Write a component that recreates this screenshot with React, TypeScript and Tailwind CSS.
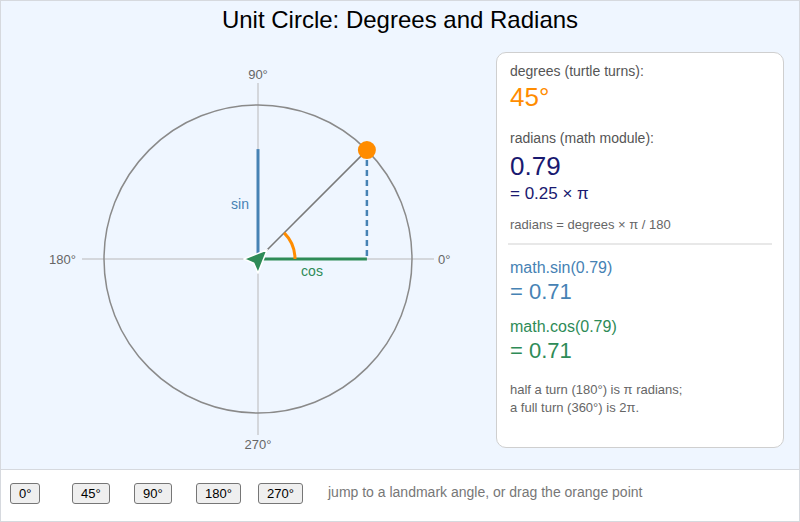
import React, { useState } from "react";

const CX = 257;
const CY = 258;
const R = 154;
const AXIS = 176;

const landmarks = [0, 45, 90, 180, 270];

function fmt(n: number) {
  return (Math.round(n * 100) / 100).toFixed(2);
}

function UnitCircle({ deg }: { deg: number }) {
  const rad = (deg * Math.PI) / 180;
  const px = CX + R * Math.cos(rad);
  const py = CY - R * Math.sin(rad);
  const arcR = 37;
  const ax = CX + arcR * Math.cos(rad);
  const ay = CY - arcR * Math.sin(rad);
  const large = deg > 180 ? 1 : 0;

  return (
    <svg width={490} height={420} viewBox="0 40 490 420" className="block">
      {/* axes */}
      <line x1={CX - AXIS} y1={CY} x2={CX + AXIS} y2={CY} stroke="#d4d7dc" strokeWidth={2} />
      <line x1={CX} y1={CY - AXIS} x2={CX} y2={CY + AXIS} stroke="#d4d7dc" strokeWidth={2} />
      <circle cx={CX} cy={CY} r={R} fill="none" stroke="#8a8a8a" strokeWidth={1.5} />

      <g fontFamily="'Liberation Sans', Arial, sans-serif" fontSize={13} fill="#666">
        <text x={CX} y={78} textAnchor="middle">90°</text>
        <text x={CX} y={448} textAnchor="middle">270°</text>
        <text x={437} y={263}>0°</text>
        <text x={75} y={263} textAnchor="end">180°</text>
      </g>

      {/* sin / cos legs */}
      <line x1={CX} y1={CY} x2={CX} y2={py - 1} stroke="#4682b4" strokeWidth={3} />
      <line x1={CX} y1={CY} x2={px} y2={CY} stroke="#2e8b57" strokeWidth={3} />
      <line x1={px} y1={py} x2={px} y2={CY} stroke="#4682b4" strokeWidth={2.5} strokeDasharray="6 4" />
      <line x1={CX} y1={CY} x2={px} y2={py} stroke="#7a7a7a" strokeWidth={1.5} />

      <path
        d={`M ${CX + arcR} ${CY} A ${arcR} ${arcR} 0 ${large} 0 ${ax} ${ay}`}
        fill="none"
        stroke="#ff8c00"
        strokeWidth={3}
      />

      <g fontFamily="'Liberation Sans', Arial, sans-serif" fontSize={14}>
        <text x={248} y={208} textAnchor="end" fill="#4682b4">sin</text>
        <text x={311} y={275} textAnchor="middle" fill="#2e8b57">cos</text>
      </g>

      {/* turtle */}
      <g transform={`translate(${CX} ${CY}) rotate(${-deg})`}>
        <polygon
          points="13,0 -10,-10 -6,0 -10,10"
          fill="#2e8b57"
          stroke="#ffffff"
          strokeWidth={1.5}
          strokeLinejoin="round"
        />
      </g>

      <circle cx={px} cy={py} r={9} fill="#ff8c00" />
    </svg>
  );
}

export default function App() {
  const [deg, setDeg] = useState(45);
  const rad = (deg * Math.PI) / 180;

  return (
    <div className="w-[800px] h-[522px] border border-[#d6d9de] font-['Liberation_Sans',Arial,sans-serif] flex flex-col overflow-hidden">
      <div className="h-[468px] bg-[#eff6ff] flex flex-col">
        <h1 className="h-[40px] pt-[5px] text-center text-[24px] leading-[28px] text-black">
          Unit Circle: Degrees and Radians
        </h1>
        <div className="flex flex-1">
          <div className="w-[495px]">
            <UnitCircle deg={deg} />
          </div>
          <div className="w-[288px] h-[396px] mt-[11px] bg-white border-[1.5px] border-[#cfcfcf] rounded-[10px] px-[13px] pt-[10px]">
            <div className="text-[14px] leading-[17px] text-[#555]">degrees (turtle turns):</div>
            <div className="text-[26px] leading-[30px] text-[#ff8c00] mt-[2px]">{deg}°</div>

            <div className="text-[14px] leading-[17px] text-[#555] mt-[18px]">radians (math module):</div>
            <div className="text-[26px] leading-[30px] text-[#191970] mt-[4px]">{fmt(rad)}</div>
            <div className="text-[17px] leading-[20px] text-[#191970] mt-[3px]">= {fmt(deg / 180)} × π</div>
            <div className="text-[13px] leading-[16px] text-[#666] mt-[13px]">radians = degrees × π / 180</div>

            <div className="h-[2px] bg-[#e8e8e8] mt-[10px] -mx-[2px]" />

            <div className="text-[16px] leading-[19px] text-[#4682b4] mt-[13px]">math.sin({fmt(rad)})</div>
            <div className="text-[22px] leading-[26px] text-[#4682b4] mt-[2px]">= {fmt(Math.sin(rad))}</div>
            <div className="text-[16px] leading-[19px] text-[#2e8b57] mt-[12px]">math.cos({fmt(rad)})</div>
            <div className="text-[22px] leading-[26px] text-[#2e8b57] mt-[2px]">= {fmt(Math.cos(rad))}</div>

            <div className="text-[13px] leading-[18px] text-[#666] mt-[17px]">
              half a turn (180°) is π radians;
              <br />
              a full turn (360°) is 2π.
            </div>
          </div>
        </div>
      </div>
      <div className="flex-1 bg-white border-t border-[#d6d9de] flex items-start pt-[11px] pl-[9px]">
        {landmarks.map((d) => (
          <div key={d} className="w-[62px]">
            <button
              onClick={() => setDeg(d)}
              className="h-[21px] px-[8px] text-[13px] leading-[19px] text-black bg-[#efefef] border border-[#767676] rounded-[3px]"
            >
              {d}°
            </button>
          </div>
        ))}
        <span className="ml-[8px] text-[14px] leading-[22px] text-[#777]">
          jump to a landmark angle, or drag the orange point
        </span>
      </div>
    </div>
  );
}
